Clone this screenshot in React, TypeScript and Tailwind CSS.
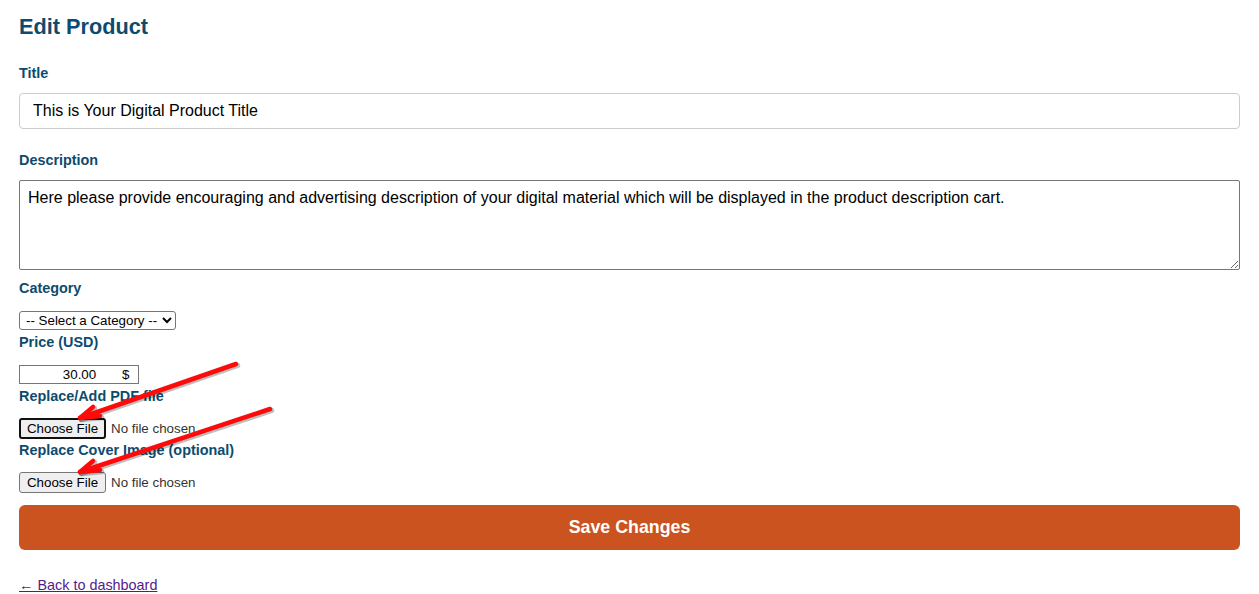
import React from 'react';

const labelClass = 'block h-[17px] text-[14.4px] leading-[17px] font-bold text-[#0d4b6e]';

const FileField = ({ focused }: { focused?: boolean }) => (
  <div className="flex h-[21px] items-center text-[13.33px]">
    <button
      type="button"
      className={
        focused
          ? 'h-[21px] w-[87px] rounded-[3px] border-2 border-[#111] bg-[#efefef] text-[13.33px] leading-[17px] text-black'
          : 'h-[21px] w-[87px] rounded-[3px] border border-[#767676] bg-[#efefef] text-[13.33px] leading-[19px] text-black'
      }
    >
      Choose File
    </button>
    <span className="ml-[5px] text-[#333]">No file chosen</span>
  </div>
);

const Arrow = ({ x1, y1, x2, y2 }: { x1: number; y1: number; x2: number; y2: number }) => (
  <g>
    <g stroke="#000" strokeOpacity="0.25" strokeWidth="5.5" strokeLinecap="round" fill="none" transform="translate(1.5 1.5)">
      <line x1={x1} y1={y1} x2={x2} y2={y2} />
      <polyline points={`${x2 + 13},${y2 - 11} ${x2},${y2} ${x2 + 20},${y2 - 2}`} strokeLinejoin="round" />
    </g>
    <g stroke="#ff0a0a" strokeWidth="4.5" strokeLinecap="round" fill="none">
      <line x1={x1} y1={y1} x2={x2} y2={y2} />
      <polyline points={`${x2 + 13},${y2 - 11} ${x2},${y2} ${x2 + 20},${y2 - 2}`} strokeLinejoin="round" />
    </g>
  </g>
);

export default function App() {
  return (
    <div className="relative min-h-[594px] bg-white px-[19px] pt-[14px] font-['Liberation_Sans',Arial,sans-serif] text-black">
      <h1 className="text-[21.7px] leading-[26px] font-bold text-[#0d4b6e]">Edit Product</h1>

      <form className="block" onSubmit={(event) => event.preventDefault()}>
        <label className={`${labelClass} mt-[25px] mb-[11px]`}>Title</label>
        <input
          type="text"
          defaultValue="This is Your Digital Product Title"
          className="block h-[36px] w-full rounded-[4px] border border-[#cccccc] px-[13px] text-[16px] text-black outline-none"
        />

        <label className={`${labelClass} mt-[23px] mb-[11px]`}>Description</label>
        <textarea
          defaultValue="Here please provide encouraging and advertising description of your digital material which will be displayed in the product description cart."
          className="block h-[90px] w-full rounded-[2px] border border-[#767676] px-[8px] py-[7px] text-[16px] leading-[19px] text-black outline-none"
        />

        <label className={`${labelClass} mt-[10px] mb-[14px]`}>Category</label>
        <select className="block h-[19px] w-[157px] rounded-[3px] border border-[#767676] bg-white pl-[2px] text-[13.33px] leading-[15px] text-black">
          <option>-- Select a Category --</option>
        </select>

        <label className={`${labelClass} mt-[4px] mb-[14px]`}>Price (USD)</label>
        <div className="flex h-[19px] w-[120px] items-center border border-[#767676] text-[13.33px] text-black">
          <input
            type="text"
            defaultValue="30.00"
            className="h-full w-[97px] pl-[22px] text-center text-[13.33px] outline-none"
          />
          <span className="ml-[5px]">$</span>
        </div>

        <label className={`${labelClass} mt-[4px] mb-[13px]`}>Replace/Add PDF file</label>
        <FileField focused />

        <label className={`${labelClass} mt-[3px] mb-[13px]`}>Replace Cover Image (optional)</label>
        <FileField />

        <button
          type="submit"
          className="mt-[12px] block h-[45px] w-full rounded-[6px] bg-[#cb5320] text-[17.8px] font-bold text-white"
        >
          Save Changes
        </button>
      </form>

      <a href="#" className="mt-[27px] block w-fit text-[14.4px] leading-[17px] text-[#551a8b] underline">
        ← Back to dashboard
      </a>

      <svg className="pointer-events-none absolute top-0 left-0" width="1259" height="594">
        <Arrow x1={236} y1={364} x2={80} y2={418} />
        <Arrow x1={270} y1={409} x2={80} y2={472} />
      </svg>
    </div>
  );
}
